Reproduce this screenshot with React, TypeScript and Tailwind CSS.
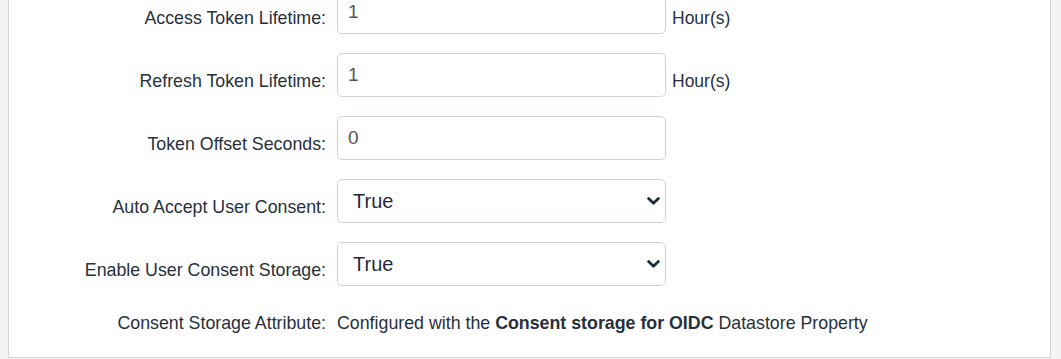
import React from 'react'

const FONT = { fontFamily: '"Liberation Sans", Arial, sans-serif' }

function Label({ children }: { children: React.ReactNode }) {
  return (
    <div className="w-[317px] shrink-0 pt-[18px] text-right text-[17.8px] leading-[20px] text-[#27303b]">
      {children}
    </div>
  )
}

function TextField({ value, unit }: { value: string; unit?: string }) {
  return (
    <div className="mb-[19px] flex h-[44px] items-start">
      <div className="ml-[11px] flex h-[44px] w-[329px] items-center rounded-[5px] border border-[#cfd2d6] bg-white pl-[10px] text-[19px] text-[#555]">
        {value}
      </div>
      {unit && (
        <span className="ml-[6px] pt-[18px] text-[17.5px] leading-[20px] text-[#27303b]">{unit}</span>
      )}
    </div>
  )
}

function SelectField({ value }: { value: string }) {
  return (
    <div className="mb-[19px] flex h-[44px] items-start">
      <div className="ml-[11px] flex h-[44px] w-[329px] items-center justify-between rounded-[5px] border border-[#cfd2d6] bg-white pl-[15px] pr-[4px] text-[20px] text-[#1f2b3a]">
        <span>{value}</span>
        <svg width="13" height="8" viewBox="0 0 13 8" className="mr-[1px]">
          <path d="M1.6 1.6 L6.5 6.2 L11.4 1.6" fill="none" stroke="#1d2a3a" strokeWidth="2.8" strokeLinecap="round" strokeLinejoin="round" />
        </svg>
      </div>
    </div>
  )
}

function Row({ label, children }: { label: string; children: React.ReactNode }) {
  return (
    <div className="flex items-start">
      <Label>{label}</Label>
      {children}
    </div>
  )
}

export default function App() {
  return (
    <div className="h-[359px] w-[1061px] overflow-hidden bg-[#f3f4f6] pb-[1px] pl-[8px] pr-[10px]" style={FONT}>
      <div className="h-[358px] overflow-hidden border border-t-0 border-[#d2d4d7] bg-white">
        <div className="-mt-[10px] flex flex-col">
          <Row label="Access Token Lifetime:">
            <TextField value="1" unit="Hour(s)" />
          </Row>
          <Row label="Refresh Token Lifetime:">
            <TextField value="1" unit="Hour(s)" />
          </Row>
          <Row label="Token Offset Seconds:">
            <TextField value="0" />
          </Row>
          <Row label="Auto Accept User Consent:">
            <SelectField value="True" />
          </Row>
          <Row label="Enable User Consent Storage:">
            <SelectField value="True" />
          </Row>
          <div className="flex items-start pt-[8px] text-[17.8px] leading-[20px] text-[#27303b]">
            <div className="w-[317px] shrink-0 text-right">Consent Storage Attribute:</div>
            <div className="ml-[11px]">
              Configured with the <b className="font-bold">Consent storage for OIDC</b> Datastore Property
            </div>
          </div>
        </div>
      </div>
    </div>
  )
}
